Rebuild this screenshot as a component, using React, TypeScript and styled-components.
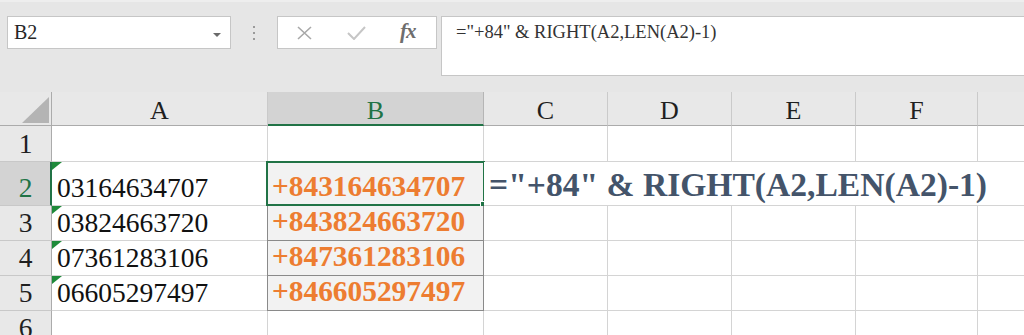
import styled, { createGlobalStyle } from 'styled-components';

const GlobalStyle = createGlobalStyle`
  html, body {
    margin: 0;
    padding: 0;
    background: #e6e6e6;
    overflow: hidden;
  }
  body {
    font-family: "Liberation Serif", "Times New Roman", serif;
  }
`;

const GREEN = '#217346';
const ORANGE = '#ed7d31';
const SLATE = '#44546a';
const GRID = '#d4d4d4';
const BOX = '#8a8a8a';

// corner, A..G
const COLS = [52, 216, 216, 124, 124, 124, 122, 124];
const ROWS = [34, 36, 44, 35, 35, 35, 35];

const Page = styled.div`
  width: 1024px;
  height: 335px;
  overflow: hidden;
  border-top: 2px solid #eeeeee;
  box-sizing: border-box;
`;

/* formula bar strip */
const Toolbar = styled.div`
  height: 90px;
  display: flex;
  align-items: flex-start;
  padding: 14px 0 0 7px;
  box-sizing: border-box;
`;

const NameBox = styled.div`
  width: 224px;
  height: 33px;
  box-sizing: border-box;
  background: #fff;
  border: 1px solid #c6c6c6;
  display: flex;
  justify-content: space-between;
  padding: 5px 9px 0 6px;
  font-size: 20px;
  line-height: 1;
  color: #262626;
`;

const Caret = styled.span`
  margin-top: 11px;
  width: 0;
  height: 0;
  border-left: 4px solid transparent;
  border-right: 4px solid transparent;
  border-top: 4px solid #6a6a6a;
`;

const Grip = styled.div`
  width: 46px;
  height: 33px;
  display: flex;
  flex-direction: column;
  align-items: center;
  justify-content: center;
  gap: 4px;

  span {
    width: 2px;
    height: 2px;
    background: #9a9a9a;
  }
`;

const ButtonBox = styled.div`
  width: 160px;
  height: 33px;
  box-sizing: border-box;
  background: #fff;
  border: 1px solid #c6c6c6;
  display: flex;
  align-items: center;
  padding-left: 19px;
`;

const IconSlot = styled.span<{ $w: number }>`
  width: ${({ $w }) => $w}px;
  display: flex;
  align-items: center;
`;

const Fx = styled.span`
  font-style: italic;
  font-weight: bold;
  font-size: 21px;
  color: #6e6e6e;
  letter-spacing: -1px;
  line-height: 1;
  margin-bottom: 2px;
`;

const FormulaInput = styled.div`
  flex: 1;
  margin-left: 4px;
  height: 60px;
  box-sizing: border-box;
  background: #fff;
  border: 1px solid #c6c6c6;
  border-right: none;
  padding: 6px 0 0 14px;
  font-size: 18.5px;
  line-height: 1;
  color: #333;
  white-space: nowrap;
`;

/* sheet */
const Sheet = styled.div`
  display: grid;
  grid-template-columns: ${COLS.map((c) => `${c}px`).join(' ')};
  grid-template-rows: ${ROWS.map((r) => `${r}px`).join(' ')};
  background: #fff;
`;

const Corner = styled.div`
  background: #e8e8e8;
  border-right: 1px solid #ababab;
  border-bottom: 1px solid #ababab;
  display: flex;
  justify-content: flex-end;
  align-items: flex-end;
  padding: 0 2px 2px 0;

  &::after {
    content: '';
    width: 0;
    height: 0;
    border-left: 27px solid transparent;
    border-bottom: 26px solid #b4b4b4;
  }
`;

const ColHeader = styled.div<{ $active?: boolean }>`
  background: ${({ $active }) => ($active ? '#d3d3d3' : '#e8e8e8')};
  color: ${({ $active }) => ($active ? GREEN : '#1f1f1f')};
  border-right: 1px solid ${({ $active }) => ($active ? '#b5b5b5' : '#cacaca')};
  border-bottom: ${({ $active }) => ($active ? `2px solid ${GREEN}` : '1px solid #ababab')};
  display: flex;
  justify-content: center;
  align-items: flex-end;
  font-size: 26px;
  line-height: 1;
  padding-bottom: ${({ $active }) => ($active ? 0 : 1)}px;
`;

const RowHeader = styled.div<{ $active?: boolean }>`
  background: ${({ $active }) => ($active ? '#d3d3d3' : '#e8e8e8')};
  color: ${({ $active }) => ($active ? GREEN : '#1f1f1f')};
  border-right: ${({ $active }) => ($active ? `2px solid ${GREEN}` : '1px solid #ababab')};
  border-bottom: 1px solid #c8c8c8;
  display: flex;
  justify-content: center;
  align-items: flex-end;
  font-size: 27.5px;
  line-height: 1;
  padding: 0 0 4px ${({ $active }) => ($active ? 1 : 0)}px;
  box-sizing: border-box;
`;

const Cell = styled.div<{ $result?: boolean; $span?: number }>`
  position: relative;
  grid-column: ${({ $span }) => ($span ? `span ${$span}` : 'auto')};
  background: ${({ $result }) => ($result ? '#f2f2f2' : '#fff')};
  border-right: 1px solid ${({ $result }) => ($result ? BOX : GRID)};
  border-bottom: 1px solid ${({ $result }) => ($result ? BOX : GRID)};
  box-shadow: ${({ $result }) => ($result ? `-1px 0 0 ${BOX}` : 'none')};
  display: flex;
  align-items: flex-end;
  padding: 0 0 4px 5px;
  white-space: nowrap;
  font-size: 27.5px;
  line-height: 1;
  color: #111;
`;

const ResultText = styled.span`
  font-weight: bold;
  font-size: 29.4px;
  color: ${ORANGE};
  margin-left: -1px;
`;

const FormulaNote = styled.span`
  font-weight: bold;
  font-size: 33.6px;
  color: ${SLATE};
  margin-bottom: -1px;
`;

const ErrorFlag = styled.span`
  position: absolute;
  top: 0;
  left: 0;
  width: 0;
  height: 0;
  border-top: 8px solid #1e8a3a;
  border-right: 10px solid transparent;
`;

const SelectionFrame = styled.span`
  position: absolute;
  top: -1px;
  left: -2px;
  right: -2px;
  bottom: -1px;
  border: 2px solid ${GREEN};
  pointer-events: none;

  &::after {
    content: '';
    position: absolute;
    right: -5px;
    bottom: -5px;
    width: 6px;
    height: 6px;
    background: ${GREEN};
    border: 1px solid #fff;
  }
`;

const numbers = ['03164634707', '03824663720', '07361283106', '06605297497'];
const letters = ['A', 'B', 'C', 'D', 'E', 'F', 'G'];
const FORMULA = '="+84" & RIGHT(A2,LEN(A2)-1)';

const ClearIcon = () => (
  <svg width="15" height="14" viewBox="0 0 15 14">
    <path d="M1 1 L14 13 M14 1 L1 13" stroke="#a8a8a8" strokeWidth="1.6" fill="none" />
  </svg>
);

const CheckIcon = () => (
  <svg width="19" height="14" viewBox="0 0 19 14">
    <path d="M1 7 L7 13 L18 1" stroke="#c6c6c6" strokeWidth="2" fill="none" />
  </svg>
);

const EmptyCells = ({ count }: { count: number }) => (
  <>
    {Array.from({ length: count }, (_, i) => (
      <Cell key={i} />
    ))}
  </>
);

export default function App() {
  return (
    <Page>
      <GlobalStyle />
      <Toolbar>
        <NameBox>
          <span>B2</span>
          <Caret />
        </NameBox>
        <Grip>
          <span />
          <span />
          <span />
        </Grip>
        <ButtonBox>
          <IconSlot $w={50}>
            <ClearIcon />
          </IconSlot>
          <IconSlot $w={53}>
            <CheckIcon />
          </IconSlot>
          <IconSlot $w={30}>
            <Fx>fx</Fx>
          </IconSlot>
        </ButtonBox>
        <FormulaInput>{FORMULA}</FormulaInput>
      </Toolbar>

      <Sheet>
        <Corner />
        {letters.map((l) => (
          <ColHeader key={l} $active={l === 'B'}>
            {l}
          </ColHeader>
        ))}

        <RowHeader>1</RowHeader>
        <EmptyCells count={7} />

        {numbers.map((n, i) => {
          const row = i + 2;
          return [
            <RowHeader key={`h${row}`} $active={row === 2}>
              {row}
            </RowHeader>,
            <Cell key={`a${row}`}>
              <ErrorFlag />
              {n}
            </Cell>,
            <Cell key={`b${row}`} $result>
              <ResultText>+84{n.slice(1)}</ResultText>
              {row === 2 && <SelectionFrame />}
            </Cell>,
            row === 2 ? (
              <Cell key={`c${row}`} $span={5}>
                <FormulaNote>{FORMULA}</FormulaNote>
              </Cell>
            ) : (
              <EmptyCells key={`e${row}`} count={5} />
            ),
          ];
        })}

        <RowHeader>6</RowHeader>
        <EmptyCells count={7} />
      </Sheet>
    </Page>
  );
}
